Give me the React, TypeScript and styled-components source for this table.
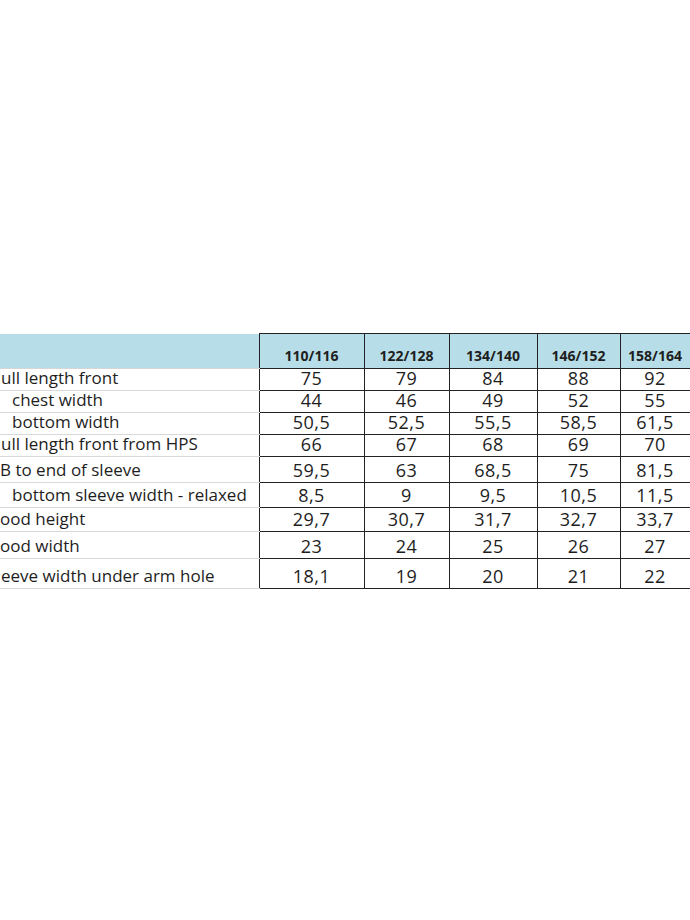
import styled, { createGlobalStyle } from "styled-components";

const GlobalStyle = createGlobalStyle`
  html, body {
    margin: 0;
    padding: 0;
    background: #ffffff;
  }
`;

const sizes = ["110/116", "122/128", "134/140", "146/152", "158/164"];
const colWidths = [105, 85, 88, 83, 70];

const rows = [
  { label: "ull length front", indent: 1, h: 22, values: ["75", "79", "84", "88", "92"] },
  { label: "chest width", indent: 12, h: 21, values: ["44", "46", "49", "52", "55"] },
  { label: "bottom width", indent: 12, h: 22, values: ["50,5", "52,5", "55,5", "58,5", "61,5"] },
  { label: "ull length front from HPS", indent: 1, h: 22, values: ["66", "67", "68", "69", "70"] },
  { label: "B to end of sleeve", indent: 0, h: 26, values: ["59,5", "63", "68,5", "75", "81,5"] },
  { label: "bottom sleeve width - relaxed", indent: 12, h: 25, values: ["8,5", "9", "9,5", "10,5", "11,5"] },
  { label: "ood height", indent: 0, h: 24, values: ["29,7", "30,7", "31,7", "32,7", "33,7"] },
  { label: "ood width", indent: 0, h: 27, values: ["23", "24", "25", "26", "27"] },
  { label: "eeve width under arm hole", indent: 1, h: 30, values: ["18,1", "19", "20", "21", "22"] },
];

export default function App() {
  return (
    <Page>
      <GlobalStyle />
      <SizeTable>
        <colgroup>
          <col style={{ width: 259 }} />
          {colWidths.map((w, i) => (
            <col key={i} style={{ width: w }} />
          ))}
        </colgroup>
        <thead>
          <HeadRow>
            <HeadLabel />
            {sizes.map((s) => (
              <HeadCell key={s}>{s}</HeadCell>
            ))}
          </HeadRow>
        </thead>
        <tbody>
          {rows.map((r) => (
            <BodyRow key={r.label} $h={r.h}>
              <LabelCell $indent={r.indent}>{r.label}</LabelCell>
              {r.values.map((v, i) => (
                <ValueCell key={i}>{v}</ValueCell>
              ))}
            </BodyRow>
          ))}
        </tbody>
      </SizeTable>
    </Page>
  );
}

const Page = styled.div`
  width: 690px;
  height: 920px;
  padding-top: 333px;
  box-sizing: border-box;
  background: #ffffff;
`;

const SizeTable = styled.table`
  border-collapse: collapse;
  table-layout: fixed;
  width: 690px;
  font-family: "Open Sans", "Liberation Sans", sans-serif;
  color: #1e1e1e;
`;

const HeadRow = styled.tr`
  height: 35px;
`;

const HeadLabel = styled.th`
  background: #b7dee8;
  border-bottom: 1px solid #d6d6d6;
  padding: 0;
`;

const HeadCell = styled.th`
  background: #b7dee8;
  border: 1.5px solid #222;
  font-size: 14px;
  font-weight: 700;
  line-height: 14px;
  vertical-align: bottom;
  text-align: center;
  padding: 0 0 5px;
  white-space: nowrap;
`;

const BodyRow = styled.tr<{ $h: number }>`
  height: ${(p) => p.$h}px;
`;

const LabelCell = styled.td<{ $indent: number }>`
  border-bottom: 1px solid #d9d9d9;
  font-size: 17px;
  line-height: 18px;
  vertical-align: bottom;
  padding: 0 0 3px ${(p) => p.$indent}px;
  white-space: nowrap;
`;

const ValueCell = styled.td`
  border: 1.5px solid #222;
  font-size: 18px;
  line-height: 18px;
  letter-spacing: 0.5px;
  vertical-align: bottom;
  text-align: center;
  padding: 0 0 3px;
  white-space: nowrap;
`;
